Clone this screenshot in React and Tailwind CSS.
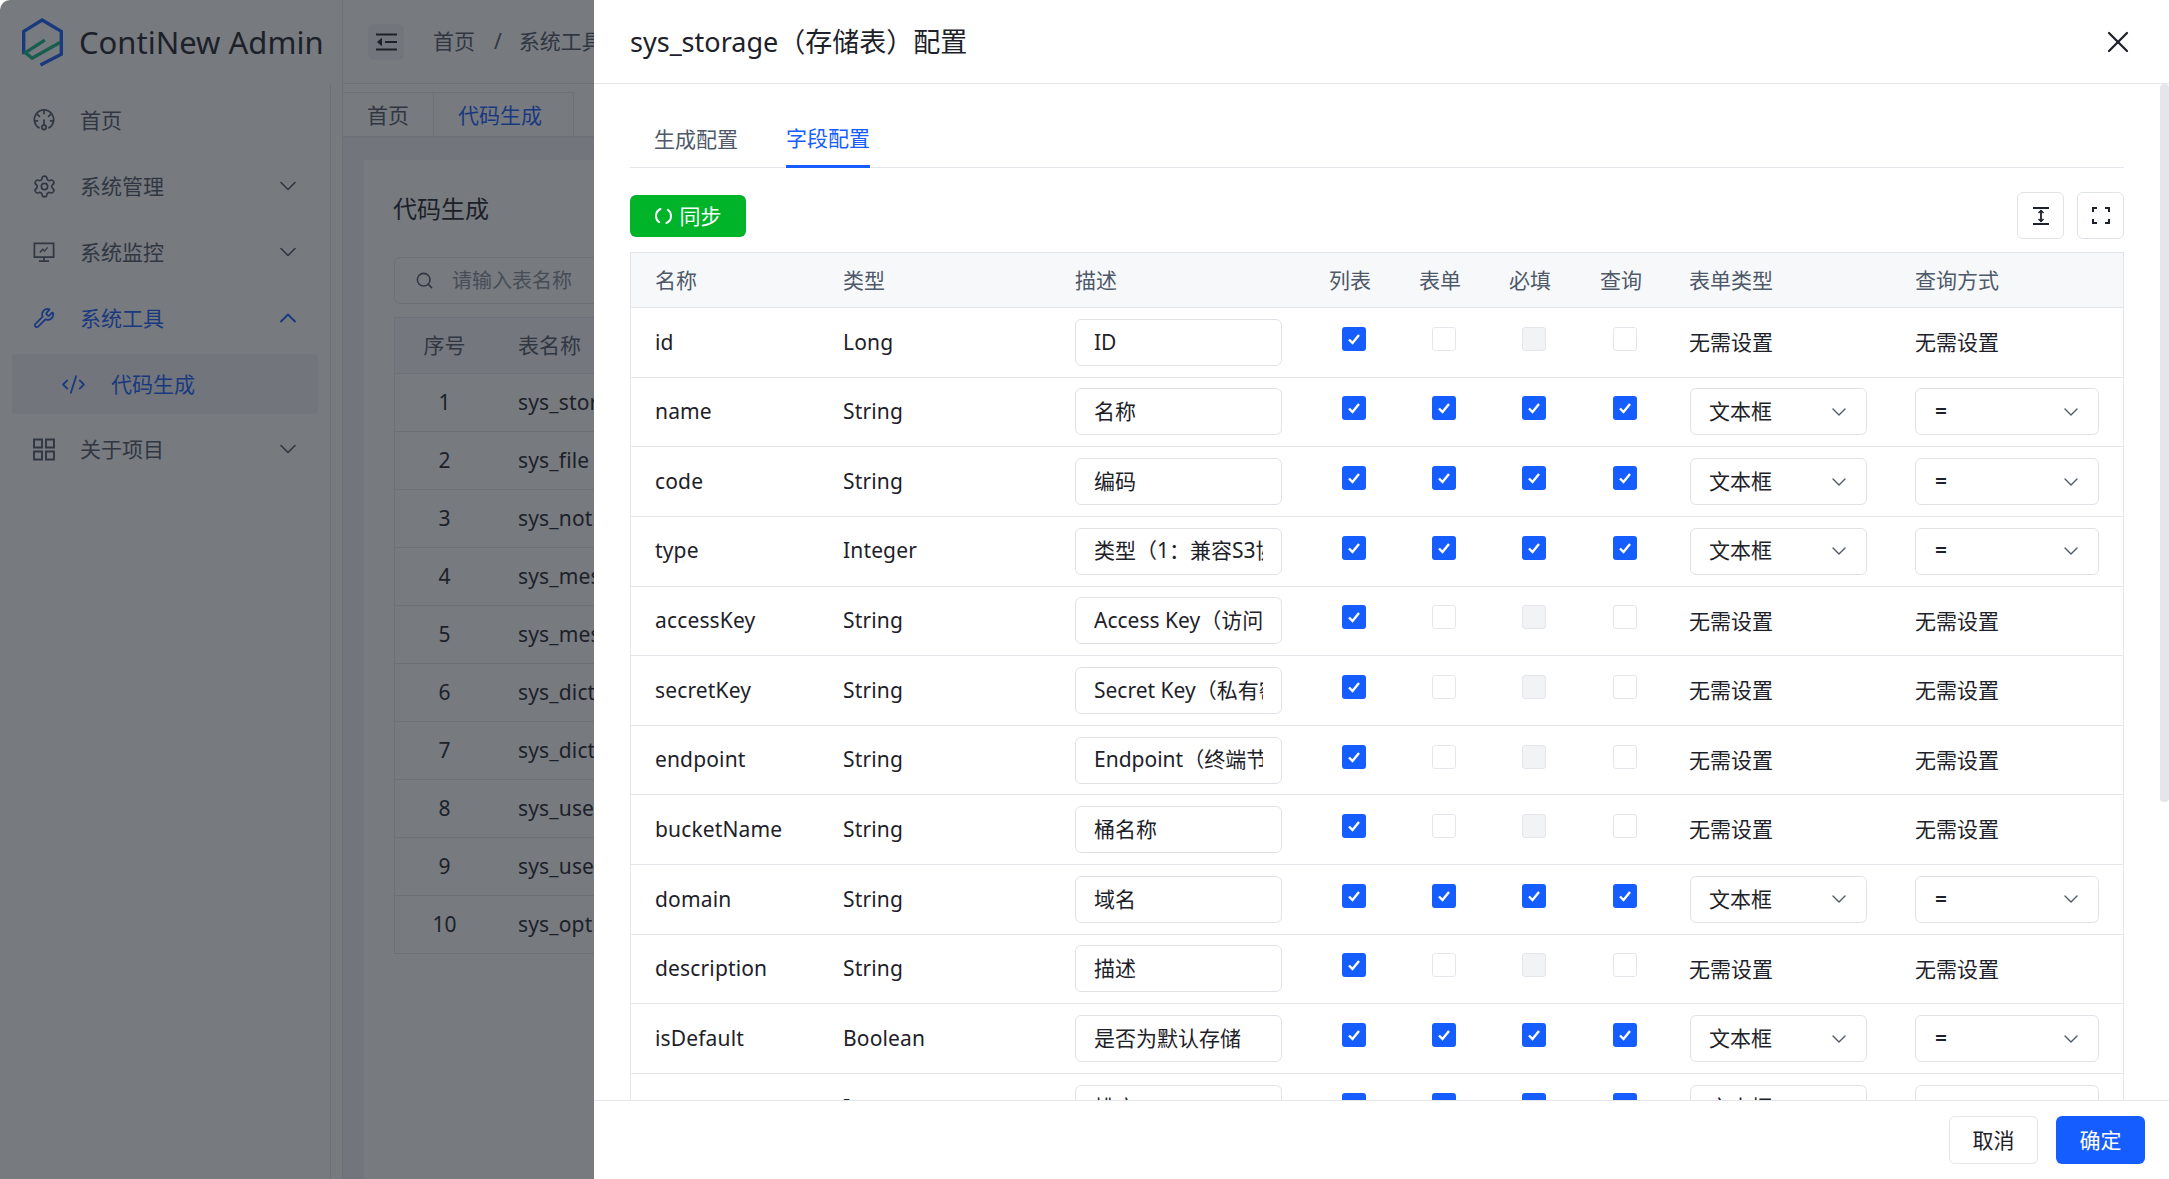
import { Settings, Wrench, CodeXml, ChevronDown, ChevronUp, Search, X } from "lucide-react";

const FONT = "font-['Noto_Sans','Noto_Sans_CJK_SC',sans-serif]";
const FIELD_COLS = "grid grid-cols-[188px_232px_254px_90px_90px_91px_89px_226px_234px] items-center";

const NAV = [
  { label: "首页", icon: <DashboardIcon /> },
  { label: "系统管理", icon: <Settings size={25} strokeWidth={1.6} className="-mx-[1.5px]" />, arrow: true },
  { label: "系统监控", icon: <MonitorIcon />, arrow: true },
];

const BACK_TABLES = [
  "sys_storage",
  "sys_file",
  "sys_notice",
  "sys_message",
  "sys_message_user",
  "sys_dict",
  "sys_dict_item",
  "sys_user",
  "sys_user_role",
  "sys_option",
];

const FIELDS = [
  ["id", "Long", "ID", false],
  ["name", "String", "名称", true],
  ["code", "String", "编码", true],
  ["type", "Integer", "类型（1：兼容S3协议存储；2：本地存储）", true],
  ["accessKey", "String", "Access Key（访问密钥）", false],
  ["secretKey", "String", "Secret Key（私有密钥）", false],
  ["endpoint", "String", "Endpoint（终端节点）", false],
  ["bucketName", "String", "桶名称", false],
  ["domain", "String", "域名", true],
  ["description", "String", "描述", false],
  ["isDefault", "Boolean", "是否为默认存储", true],
  ["sort", "Integer", "排序", true],
];

function DashboardIcon() {
  return (
    <svg width="22" height="24" viewBox="0 0 24 24" fill="none" stroke="currentColor" strokeWidth="1.9" strokeLinecap="round">
      <path d="M6.5 20.5A10.5 10.5 0 1 1 17.5 20.5" />
      <circle cx="12" cy="20" r="2.4" />
      <path d="M12 17.5V12M12 2v3M5 6l2 2M19 6l-2 2M1.8 13h3M22.2 13h-3" />
    </svg>
  );
}

function MonitorIcon() {
  return (
    <svg width="22" height="24" viewBox="0 0 24 24" fill="none" stroke="currentColor" strokeWidth="1.9">
      <path d="M1.5 2.5h21v15h-21zM12 17.5V22M6.5 22h11" />
      <path d="M7.5 12.5l3-3.5 2 2 3.5-4" strokeWidth="1.5" />
    </svg>
  );
}

function AppsIcon() {
  return (
    <svg width="22" height="24" viewBox="0 0 22 24" fill="none" stroke="currentColor" strokeWidth="1.9">
      <path d="M1 2.5h8v8H1zM13 2.5h8v8h-8zM1 14.5h8v8H1zM13 14.5h8v8h-8z" />
    </svg>
  );
}

function Logo() {
  return (
    <svg width="42" height="49" viewBox="35 22 125 146" fill="none" strokeWidth="10">
      <path d="M40 130V62L95 28L152 62V130L90 162" stroke="#165dff" />
      <path d="M103 88L45 125L65 142L148 95" stroke="#12b886" />
    </svg>
  );
}

function FoldIcon() {
  return (
    <svg width="21" height="18" viewBox="0 0 21 18" fill="none" stroke="#1d2129" strokeWidth="2">
      <path d="M0 1.5h21M9 9h12M0 16.5h21" />
      <path d="M5.5 5.5L1.5 9l4 3.5z" fill="#1d2129" strokeWidth="1" />
    </svg>
  );
}

function SyncIcon() {
  return (
    <svg width="17" height="18" viewBox="0 0 17 18" fill="none" stroke="white" strokeWidth="2" strokeLinecap="round">
      <path d="M5.5 2C2.8 3.2 1 5.8 1 9c0 2.6 1.2 4.8 3.2 6.2" />
      <path d="M11.5 16c2.7-1.2 4.5-3.8 4.5-7 0-2.6-1.2-4.8-3.2-6.2" />
    </svg>
  );
}

function HeightIcon() {
  return (
    <svg width="16" height="18" viewBox="0 0 16 18" fill="none" stroke="#1d2129" strokeWidth="1.8">
      <path d="M0 1h16M0 17h16M8 3.5v11" />
      <path d="M5.5 6L8 3.5 10.5 6M5.5 12L8 14.5 10.5 12" strokeWidth="1.5" />
    </svg>
  );
}

function FullscreenIcon() {
  return (
    <svg width="18" height="17" viewBox="0 0 18 17" fill="none" stroke="#1d2129" strokeWidth="2">
      <path d="M1 5V1h4M13 1h4v4M17 12v4h-4M5 16H1v-4" />
    </svg>
  );
}

function NavItem({ label, icon, arrow }) {
  return (
    <div className="flex h-[66px] items-center pl-[33px] pr-[28px] text-[#4e5969]">
      {icon}
      <span className="ml-[25px] pt-[1px] text-[21px] text-[#4e5969]">{label}</span>
      {arrow && <ChevronDown size={28} strokeWidth={1.4} className="ml-auto" />}
    </div>
  );
}

function Sidebar() {
  return (
    <div className="flex w-[343px] shrink-0 flex-col border-r border-[#e5e6eb] bg-white">
      <div className="flex h-[84px] shrink-0 items-center gap-[15px] pl-[22px]">
        <Logo />
        <span className="whitespace-nowrap text-[31px] text-[#1d2129]">ContiNew Admin</span>
      </div>
      <div className="flex-1 pr-[11px]">
        <div className="h-full w-[331px] border-r border-[#e5e6eb] pt-[3px]">
          {NAV.map((item) => (
            <NavItem key={item.label} {...item} />
          ))}
          <div className="flex h-[66px] items-center pl-[33px] pr-[28px] text-[#165dff]">
            <Wrench size={22} strokeWidth={1.9} />
            <span className="ml-[25px] pt-[1px] text-[21px]">系统工具</span>
            <ChevronUp size={28} strokeWidth={1.6} className="ml-auto" />
          </div>
          <div className="mx-[12px] mb-[2px] mt-[3px] flex h-[60px] w-[306px] items-center rounded-[3px] bg-[#f2f3f5] pl-[49px] text-[#165dff]">
            <CodeXml size={25} strokeWidth={1.7} />
            <span className="ml-[25px] pt-[1px] text-[21px]">代码生成</span>
          </div>
          <NavItem label="关于项目" icon={<AppsIcon />} arrow />
        </div>
      </div>
    </div>
  );
}

function Backdrop() {
  return (
    <div className="flex min-w-0 flex-1 flex-col bg-[#f2f3f5]">
      <div className="flex h-[84px] shrink-0 items-center border-b border-[#e5e6eb] bg-white pl-[25px]">
        <div className="flex h-[36px] w-[36px] items-center justify-center rounded-[6px] bg-[#f2f3f5]">
          <FoldIcon />
        </div>
        <span className="ml-[29px] pt-[1px] text-[21px] text-[#4e5969]">首页</span>
        <span className="ml-[19px] text-[21px] text-[#4e5969]">/</span>
        <span className="ml-[17px] whitespace-nowrap pt-[1px] text-[21px] text-[#4e5969]">系统工具</span>
      </div>
      <div className="flex h-[54px] shrink-0 items-end border-b-2 border-[#e5e6eb] bg-white">
        <div className="flex h-[44px] w-[91px] items-center border-r border-t border-[#e5e6eb] pl-[24px] pt-[2px] text-[21px] text-[#4e5969]">首页</div>
        <div className="flex h-[44px] w-[140px] items-center border-r border-t border-[#e5e6eb] pl-[24px] pt-[2px] text-[21px] text-[#165dff]">代码生成</div>
      </div>
      <div className="flex-1 pl-[21px] pt-[22px]">
        <div className="h-full bg-white pl-[30px]">
          <div className="-ml-[1px] flex h-[97px] items-center text-[24px] text-[#1d2129]">代码生成</div>
          <div className="flex h-[47px] w-[320px] items-center rounded-[6px] border border-[#e5e6eb] pl-[20px]">
            <Search size={19} strokeWidth={2} className="text-[#4e5969]" />
            <span className="ml-[18px] pt-[1px] text-[20px] text-[#86909c]">请输入表名称</span>
          </div>
          <div className="mt-[13px] border-l border-t border-[#e5e6eb]">
            <div className="flex h-[56px] items-center border-b border-[#e5e6eb] bg-[#f7f8fa] text-[21px] text-[#4e5969]">
              <span className="w-[99px] text-center">序号</span>
              <span className="pl-[24px]">表名称</span>
            </div>
            {BACK_TABLES.map((name, i) => (
              <div key={name} className="flex h-[58px] items-center border-b border-[#e5e6eb] text-[21px] text-[#1d2129]">
                <span className="w-[99px] text-center">{i + 1}</span>
                <span className="whitespace-nowrap pl-[24px] tracking-[0.15px]">{name}</span>
              </div>
            ))}
          </div>
        </div>
      </div>
    </div>
  );
}

function Check({ state }) {
  if (state === "on") {
    return (
      <div className="mb-[7px] ml-[37px] flex h-[24px] w-[24px] items-center justify-center rounded-[3px] bg-[#165dff]">
        <svg width="14" height="12" viewBox="0 0 14 12" fill="none" stroke="white" strokeWidth="2.4">
          <path d="M2 6.5L5.5 10L12 2" />
        </svg>
      </div>
    );
  }
  return (
    <div
      className={`mb-[7px] ml-[37px] h-[24px] w-[24px] rounded-[3px] border border-[#e5e6eb] ${
        state === "disabled" ? "bg-[#f2f3f5]" : "bg-white"
      }`}
    />
  );
}

function SelectBox({ value, width, padding, bold }) {
  return (
    <div className={`flex h-[47px] items-center justify-between rounded-[6px] border border-[#dfe3e8] ${width} ${padding} pr-[15px]`}>
      <span className={`text-[21px] text-[#1d2129] ${bold ? "font-semibold" : ""}`}>{value}</span>
      <ChevronDown size={24} strokeWidth={1.4} className="text-[#4e5969]" />
    </div>
  );
}

function FieldRow({ name, type, comment, editable }) {
  return (
    <div className={`${FIELD_COLS} h-[69.64px] border-b border-[#e5e6eb] text-[21px] text-[#1d2129]`}>
      <span className="pl-[24px] tracking-[0.15px]">{name}</span>
      <span className="pl-[24px] tracking-[0.15px]">{type}</span>
      <div className="pl-[24px]">
        <div className="flex h-[47px] w-[207px] items-center rounded-[6px] border border-[#dfe3e8] px-[18px]">
          <div className="overflow-hidden whitespace-nowrap">{comment}</div>
        </div>
      </div>
      <Check state="on" />
      <Check state={editable ? "on" : "off"} />
      <Check state={editable ? "on" : "disabled"} />
      <Check state={editable ? "on" : "off"} />
      {editable ? (
        <div className="pl-[25px]">
          <SelectBox value="文本框" width="w-[177px]" padding="pl-[18px]" />
        </div>
      ) : (
        <span className="pl-[24px] pt-[1px]">无需设置</span>
      )}
      {editable ? (
        <div className="pl-[24px]">
          <SelectBox value="=" width="w-[184px]" padding="pl-[19px]" bold />
        </div>
      ) : (
        <span className="pl-[24px] pt-[1px]">无需设置</span>
      )}
    </div>
  );
}

function ConfigDrawer() {
  return (
    <div className="absolute bottom-0 right-0 top-0 flex w-[1575px] flex-col bg-white">
      <div className="flex h-[84px] shrink-0 items-center justify-between border-b border-[#e5e6eb] pl-[36px] pr-[33px]">
        <span className="pt-[2px] text-[27px] text-[#1d2129]">sys_storage（存储表）配置</span>
        <X size={36} strokeWidth={1.5} className="text-[#1d2129]" />
      </div>

      <div className="relative min-h-0 flex-1 overflow-hidden pl-[36px] pr-[45px]">
        <div className="mt-[28px] flex h-[56px] gap-[48px] border-b border-[#e5e6eb] pl-[24px] text-[21px]">
          <div className="flex items-center pt-[1px] text-[#4e5969]">生成配置</div>
          <div className="-mb-px flex items-center border-b-[3px] border-[#165dff] pt-[1px] text-[#165dff]">字段配置</div>
        </div>

        <div className="mt-[24px] flex h-[47px] items-center justify-between">
          <div className="flex h-[42px] w-[116px] items-center justify-center gap-[8px] rounded-[6px] bg-[#00b42a] text-[21px] text-white">
            <SyncIcon />
            <span className="pt-[2px]">同步</span>
          </div>
          <div className="flex gap-[13px]">
            <div className="flex h-[47px] w-[47px] items-center justify-center rounded-[6px] border border-[#dfe3e8]">
              <HeightIcon />
            </div>
            <div className="flex h-[47px] w-[47px] items-center justify-center rounded-[6px] border border-[#dfe3e8]">
              <FullscreenIcon />
            </div>
          </div>
        </div>

        <div className="mt-[13px] border-x border-t border-[#e5e6eb]">
          <div className={`${FIELD_COLS} h-[55px] border-b border-[#e5e6eb] bg-[#f7f8fa] text-[21px] text-[#4e5969]`}>
            {["名称", "类型", "描述", "列表", "表单", "必填", "查询", "表单类型", "查询方式"].map((title) => (
              <span key={title} className="pl-[24px] pt-[1px]">{title}</span>
            ))}
          </div>
          {FIELDS.map(([name, type, comment, editable]) => (
            <FieldRow key={name} name={name} type={type} comment={comment} editable={editable} />
          ))}
        </div>

        {/* scrollbar */}
        <div className="absolute right-0 top-0 h-[718px] w-[9px] rounded-[4px] bg-[#e5e6eb]" />
      </div>

      <div className="flex h-[79px] shrink-0 items-start justify-end gap-[18px] border-t border-[#e5e6eb] pr-[24px] pt-[15px] text-[21px]">
        <div className="flex h-[48px] w-[89px] items-center justify-center rounded-[6px] border border-[#e5e6eb] pt-[1px] text-[#1d2129]">取消</div>
        <div className="flex h-[48px] w-[89px] items-center justify-center rounded-[6px] bg-[#165dff] pt-[1px] text-white">确定</div>
      </div>
    </div>
  );
}

export default function App() {
  return (
    <div className={`${FONT} relative h-[1179px] w-[2169px] overflow-hidden bg-white`}>
      <div className="relative flex h-full overflow-hidden rounded-tl-[10px]">
        <Sidebar />
        <Backdrop />
        {/* modal mask */}
        <div className="absolute inset-0 bg-[#1d2129]/60" />
      </div>
      <ConfigDrawer />
    </div>
  );
}
